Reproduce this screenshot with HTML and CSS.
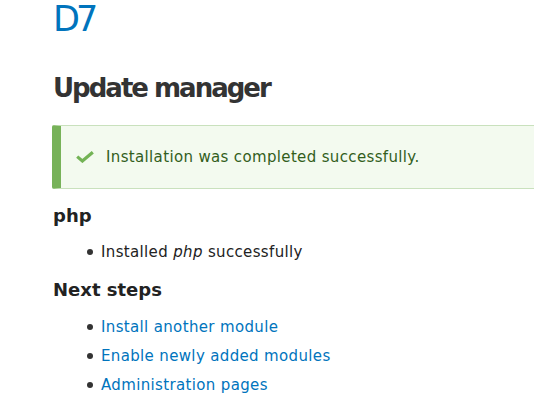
FILE: index.html
```html
<!DOCTYPE html>
<html>
<head>
<meta charset="utf-8">
<link rel="stylesheet" href="styles.css">
</head>
<body>
<div class="page">
  <div class="site-name">D7</div>
  <h1 class="page-title">Update manager</h1>
  <div class="messages">
    <svg class="check" width="18" height="12" viewBox="0 0 18 12"><path d="M1.2 5.6 L6.4 10 L16.8 1.2" fill="none" stroke="#73b355" stroke-width="3.2"/></svg>
    <span>Installation was completed successfully.</span>
  </div>
  <h2 class="section first">php</h2>
  <ul class="list first">
    <li>Installed <em>php</em> successfully</li>
  </ul>
  <h2 class="section">Next steps</h2>
  <ul class="list">
    <li><a href="#">Install another module</a></li>
    <li><a href="#">Enable newly added modules</a></li>
    <li><a href="#">Administration pages</a></li>
  </ul>
</div>
</body>
</html>
```
FILE: styles.css
```css
html, body {
  margin: 0;
  padding: 0;
  overflow: hidden;
  background: #fff;
}
body {
  font-family: "DejaVu Sans", sans-serif;
  color: #222;
  font-size: 15px;
}
.page {
  width: 620px;
  padding: 0 0 0 53px;
}
.site-name {
  font-size: 35px;
  letter-spacing: -4px;
  color: #0074bd;
  line-height: 40px;
  margin: -1px 0 0 0;
}
.page-title {
  font-size: 26px;
  letter-spacing: -2px;
  font-weight: bold;
  color: #333;
  margin: 33px 0 0 0;
  line-height: 32px;
}
.messages {
  display: flex;
  align-items: center;
  margin: 21px 0 0 -1px;
  height: 64px;
  box-sizing: border-box;
  background: #f3faef;
  border: 1px solid #c9e1bd;
  border-left: 9px solid #77b259;
  border-radius: 2px;
  color: #325e1c;
  padding-left: 15px;
  letter-spacing: 0.35px;
  line-height: 20px;
}
.check {
  margin-right: 12px;
}
.section {
  font-size: 18px;
  font-weight: bold;
  color: #222;
  margin: 16px 0 0 0;
  line-height: 24px;
}
.section.first {
  margin-top: 15px;
}
.list {
  list-style: none;
  margin: 15px 0 0 0;
  padding: 0 0 0 34px;
  letter-spacing: 0.35px;
}
.list.first {
  margin-top: 14px;
}
.list li {
  line-height: 20px;
  margin-bottom: 9px;
}
.list li:last-child {
  margin-bottom: 0;
}
.list li::before {
  content: "";
  display: inline-block;
  width: 6px;
  height: 6px;
  border-radius: 50%;
  background: #333;
  margin-right: 8px;
  vertical-align: middle;
  position: relative;
  top: -1px;
}
.list a {
  color: #0074bd;
  text-decoration: none;
}
```
